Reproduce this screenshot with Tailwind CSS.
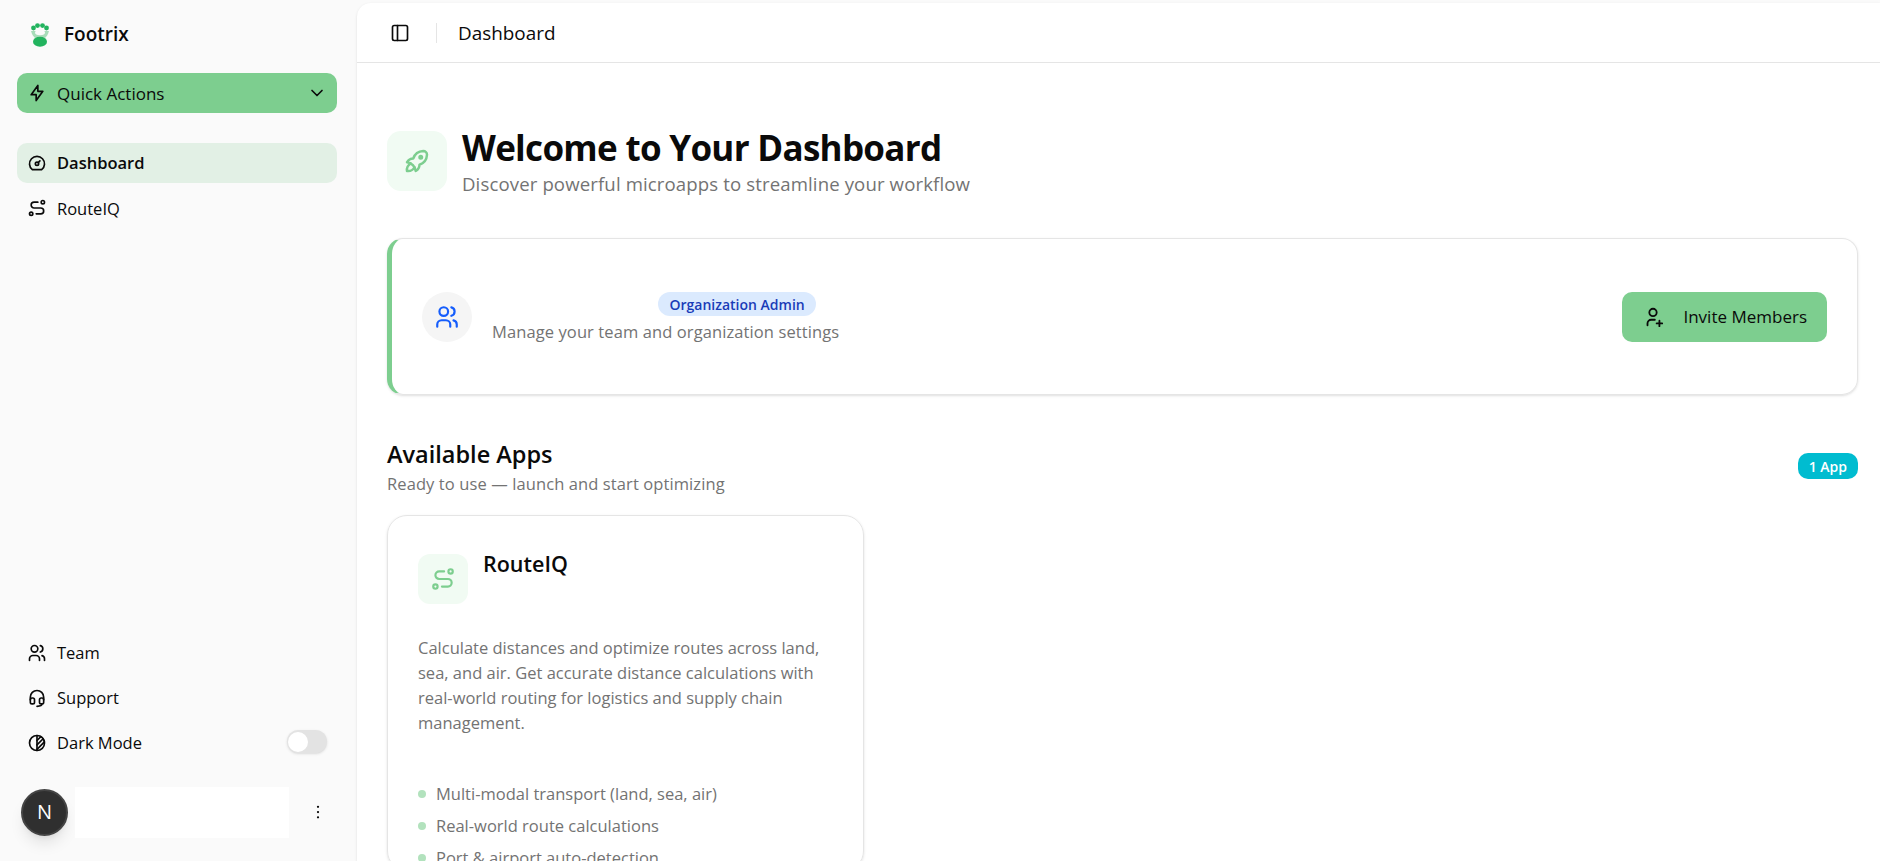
<!DOCTYPE html>
<html>
  <head>
    <meta charset="utf-8" />
    <title>Footrix</title>
    <script src="https://cdn.jsdelivr.net/npm/@tailwindcss/browser@4"></script>
  </head>
  <body class="h-screen overflow-hidden bg-[#fafafa] font-['Open_Sans','Noto_Sans',sans-serif] text-[#0a0a0a]">
    <div class="flex h-[861px]">
      <!-- sidebar -->
      <aside class="flex w-[357px] shrink-0 flex-col pl-[17px] pr-[20px]">
        <div class="flex h-[68px] shrink-0 items-center gap-[15px] pl-[14px] pt-[1px]">
          <svg class="h-[24px] w-[18px]" viewBox="0 0 18 24">
            <circle cx="2.5" cy="5" r="2.4" fill="#22b35e" />
            <circle cx="6.5" cy="2.6" r="2.4" fill="#22b35e" />
            <circle cx="11.5" cy="2.6" r="2.4" fill="#22b35e" />
            <circle cx="15.5" cy="5" r="2.4" fill="#22b35e" />
            <path d="M0 8h18c-1 4-3 6-4 7H4C3 14 1 12 0 8z" fill="#a8dcb9" />
            <ellipse cx="9" cy="9.6" rx="5" ry="2.6" fill="#fafafa" />
            <ellipse cx="9" cy="18.8" rx="7" ry="5" fill="#22b35e" />
          </svg>
          <span class="text-[19px] font-semibold">Footrix</span>
        </div>
        <button class="mt-[5px] flex h-[40px] shrink-0 items-center rounded-[10px] bg-[#7dce8f] px-[10px] text-[17px]">
          <svg class="mr-[10px] h-[20px] w-[20px]" viewBox="0 0 24 24" fill="none" stroke="currentColor" stroke-width="2" stroke-linecap="round" stroke-linejoin="round"><path d="M13 3v7h6l-8 11v-7H5l8-11" /></svg>
          <span class="pt-[2px]">Quick Actions</span>
          <svg class="ml-auto h-[20px] w-[20px]" viewBox="0 0 24 24" fill="none" stroke="currentColor" stroke-width="2" stroke-linecap="round" stroke-linejoin="round"><path d="m6 9 6 6 6-6" /></svg>
        </button>
        <nav class="mt-[30px] flex flex-col gap-[5px] text-[16.5px]">
          <a class="flex h-[40px] items-center gap-[10px] rounded-[10px] bg-[#e2f0e5] px-[10px] font-semibold">
            <svg class="h-[20px] w-[20px]" viewBox="0 0 24 24" fill="none" stroke="currentColor" stroke-width="2" stroke-linecap="round" stroke-linejoin="round"><circle cx="12" cy="13" r="2" /><path d="m13.45 11.55 2.05-2.05" /><path d="M6.4 20a9 9 0 1 1 11.2 0z" /></svg>
            <span class="pt-[1px]">Dashboard</span>
          </a>
          <a class="flex h-[40px] items-center gap-[10px] px-[10px]">
            <svg class="h-[20px] w-[20px]" viewBox="0 0 24 24" fill="none" stroke="currentColor" stroke-width="2" stroke-linecap="round" stroke-linejoin="round"><path d="M3 19a2 2 0 1 0 4 0a2 2 0 0 0-4 0" /><path d="M19 7a2 2 0 1 0 0-4a2 2 0 0 0 0 4z" /><path d="M11 19h5.5a3.5 3.5 0 0 0 0-7h-8a3.5 3.5 0 0 1 0-7h4.5" /></svg>
            <span class="pt-[2px]">RouteIQ</span>
          </a>
        </nav>
        <div class="mt-auto flex flex-col gap-[5px] text-[16.5px]">
          <a class="flex h-[40px] items-center gap-[10px] px-[10px]">
            <svg class="h-[20px] w-[20px]" viewBox="0 0 24 24" fill="none" stroke="currentColor" stroke-width="2" stroke-linecap="round" stroke-linejoin="round"><circle cx="9" cy="7" r="4" /><path d="M3 21v-2a4 4 0 0 1 4-4h4a4 4 0 0 1 4 4v2" /><path d="M16 3.13a4 4 0 0 1 0 7.75" /><path d="M21 21v-2a4 4 0 0 0-3-3.85" /></svg>
            <span class="pt-[1px]">Team</span>
          </a>
          <a class="flex h-[40px] items-center gap-[10px] px-[10px]">
            <svg class="h-[20px] w-[20px]" viewBox="0 0 24 24" fill="none" stroke="currentColor" stroke-width="2" stroke-linecap="round" stroke-linejoin="round"><path d="M4 14v-3a8 8 0 1 1 16 0v3" /><path d="M18 19c0 1.657-2.686 3-6 3" /><path d="M4 14a2 2 0 0 1 2-2h1a2 2 0 0 1 2 2v3a2 2 0 0 1-2 2H6a2 2 0 0 1-2-2v-3z" /><path d="M15 14a2 2 0 0 1 2-2h1a2 2 0 0 1 2 2v3a2 2 0 0 1-2 2h-1a2 2 0 0 1-2-2v-3z" /></svg>
            <span class="pt-[1px]">Support</span>
          </a>
          <div class="flex h-[40px] items-center gap-[10px] px-[10px]">
            <svg class="h-[20px] w-[20px]" viewBox="0 0 24 24" fill="none" stroke="currentColor" stroke-width="2" stroke-linecap="round" stroke-linejoin="round"><circle cx="12" cy="12" r="9" /><path d="M12 3v18" /><path d="m12 9 4.65-4.65" /><path d="m12 14.3 7.37-7.37" /><path d="m12 19.6 8.85-8.85" /></svg>
            <span class="pt-[1px]">Dark Mode</span>
            <span class="mb-[3px] ml-auto mr-[0px] flex h-[23px] w-[40px] items-center rounded-full bg-[#e3e3e3] px-[1px] shadow-sm">
              <span class="h-[20px] w-[20px] rounded-full bg-white"></span>
            </span>
          </div>
        </div>
        <div class="mb-[23px] mt-[23px] flex h-[52px] shrink-0 items-center">
          <span class="ml-[4px] flex h-[47px] w-[47px] shrink-0 items-center justify-center rounded-full border-2 border-[#444] bg-[#2f2f2f] text-[20px] font-medium text-white shadow-lg">N</span>
          <span class="ml-[7px] h-[51px] w-[214px] bg-white"></span>
          <svg class="ml-[20px] h-[18px] w-[18px]" viewBox="0 0 24 24" fill="none" stroke="currentColor" stroke-width="3" stroke-linecap="round" stroke-linejoin="round"><path d="M12 5h.01M12 12h.01M12 19h.01" /></svg>
        </div>
      </aside>
      <!-- main -->
      <div class="mt-[3px] flex min-w-0 flex-1 flex-col overflow-hidden rounded-tl-[14px] bg-white shadow-sm">
        <header class="flex h-[60px] shrink-0 items-center border-b border-[#e5e5e5] pl-[33px] pt-[1px]">
          <svg class="h-[20px] w-[20px]" viewBox="0 0 24 24" fill="none" stroke="currentColor" stroke-width="2" stroke-linecap="round" stroke-linejoin="round"><rect x="3" y="3" width="18" height="18" rx="2" /><path d="M9 3v18" /></svg>
          <span class="ml-[26px] h-[20px] w-px bg-[#e5e5e5]"></span>
          <h1 class="ml-[21px] text-[18.9px] font-medium">Dashboard</h1>
        </header>
        <main class="pl-[30px] pr-[22px] pt-[68px]">
          <div class="flex items-start gap-[15px]">
            <div class="flex h-[60px] w-[60px] shrink-0 items-center justify-center rounded-[14px] bg-[#f1fbf3] text-[#7dce8f]">
              <svg class="h-[30px] w-[30px]" viewBox="0 0 24 24" fill="none" stroke="currentColor" stroke-width="2" stroke-linecap="round" stroke-linejoin="round"><path d="M4 13a8 8 0 0 1 7 7a6 6 0 0 0 3-5a9 9 0 0 0 6-8a3 3 0 0 0-3-3a9 9 0 0 0-8 6a6 6 0 0 0-5 3" /><path d="M7 14a6 6 0 0 0-3 6a6 6 0 0 0 6-3" /><circle cx="15" cy="9" r="1" /></svg>
            </div>
            <div class="-mt-[3px]">
              <h2 class="text-[35px] leading-[40px] font-bold tracking-[-0.7px]">Welcome to Your Dashboard</h2>
              <p class="mt-[2px] text-[18.6px] leading-[28px] tracking-[0.12px] text-[#737373]">Discover powerful microapps to streamline your workflow</p>
            </div>
          </div>
          <section class="mt-[40px] flex h-[157px] items-center rounded-[16px] border border-l-[5px] border-[#e5e5e5] border-l-[#7dce8f] pl-[30px] pr-[30px] shadow-sm">
            <div class="flex h-[50px] w-[50px] items-center justify-center rounded-full bg-[#f5f5f5] text-[#155dfc]">
              <svg class="h-[26px] w-[26px]" viewBox="0 0 24 24" fill="none" stroke="currentColor" stroke-width="2" stroke-linecap="round" stroke-linejoin="round"><circle cx="9" cy="7" r="4" /><path d="M3 21v-2a4 4 0 0 1 4-4h4a4 4 0 0 1 4 4v2" /><path d="M16 3.13a4 4 0 0 1 0 7.75" /><path d="M21 21v-2a4 4 0 0 0-3-3.85" /></svg>
            </div>
            <div class="ml-[20px] mt-[3px]">
              <div class="pl-[166px]">
                <span class="inline-flex h-[24px] items-center rounded-full bg-[#dbeafe] px-[11.5px] text-[14px] font-semibold text-[#193cb8]">Organization Admin</span>
              </div>
              <p class="mt-[4px] text-[16.5px] leading-[24px] tracking-[0.1px] text-[#737373]">Manage your team and organization settings</p>
            </div>
            <button class="ml-auto flex h-[50px] items-center rounded-[10px] bg-[#7dce8f] pl-[20px] pr-[20px] text-[17px] font-medium">
              <svg class="mr-[19px] h-[22px] w-[22px]" viewBox="0 0 24 24" fill="none" stroke="currentColor" stroke-width="2" stroke-linecap="round" stroke-linejoin="round"><circle cx="12" cy="7" r="4" /><path d="M16 19h6" /><path d="M19 16v6" /><path d="M6 21v-2a4 4 0 0 1 4-4h4" /></svg>
              <span class="pt-[1px]">Invite Members</span>
            </button>
          </section>
          <div class="mt-[43px] flex items-start justify-between">
            <div>
              <h3 class="text-[23.5px] leading-[32px] font-semibold">Available Apps</h3>
              <p class="mt-[2px] text-[16.5px] leading-[24px] tracking-[0.1px] text-[#737373]">Ready to use — launch and start optimizing</p>
            </div>
            <span class="mt-[15px] flex h-[26px] items-center rounded-[10px] bg-[#00bcd0] px-[11px] text-[14px] font-semibold text-white">1 App</span>
          </div>
          <article class="mt-[19px] w-[477px] rounded-[20px] border border-[#e5e5e5] px-[30px] pt-[38px] shadow-sm">
            <div class="flex gap-[15px]">
              <div class="flex h-[50px] w-[50px] items-center justify-center rounded-[12px] bg-[#f1fbf3] text-[#7dce8f]">
                <svg class="h-[26px] w-[26px]" viewBox="0 0 24 24" fill="none" stroke="currentColor" stroke-width="2" stroke-linecap="round" stroke-linejoin="round"><path d="M3 19a2 2 0 1 0 4 0a2 2 0 0 0-4 0" /><path d="M19 7a2 2 0 1 0 0-4a2 2 0 0 0 0 4z" /><path d="M11 19h5.5a3.5 3.5 0 0 0 0-7h-8a3.5 3.5 0 0 1 0-7h4.5" /></svg>
              </div>
              <h4 class="-mt-[4px] text-[21.5px] leading-[28px] font-semibold">RouteIQ</h4>
            </div>
            <p class="mt-[31px] text-[16.5px] leading-[25px] text-[#737373]">Calculate distances and optimize routes across land, sea, and air. Get accurate distance calculations with real-world routing for logistics and supply chain management.</p>
            <ul class="mt-[46px] flex flex-col gap-[7px] text-[16.5px] leading-[25px] text-[#737373]">
              <li class="flex items-center gap-[10px]"><span class="h-[8px] w-[8px] rounded-full bg-[#b2e2bd]"></span>Multi-modal transport (land, sea, air)</li>
              <li class="flex items-center gap-[10px]"><span class="h-[8px] w-[8px] rounded-full bg-[#b2e2bd]"></span>Real-world route calculations</li>
              <li class="flex items-center gap-[10px]"><span class="h-[8px] w-[8px] rounded-full bg-[#b2e2bd]"></span>Port &amp; airport auto-detection</li>
            </ul>
          </article>
        </main>
      </div>
    </div>
  </body>
</html>
